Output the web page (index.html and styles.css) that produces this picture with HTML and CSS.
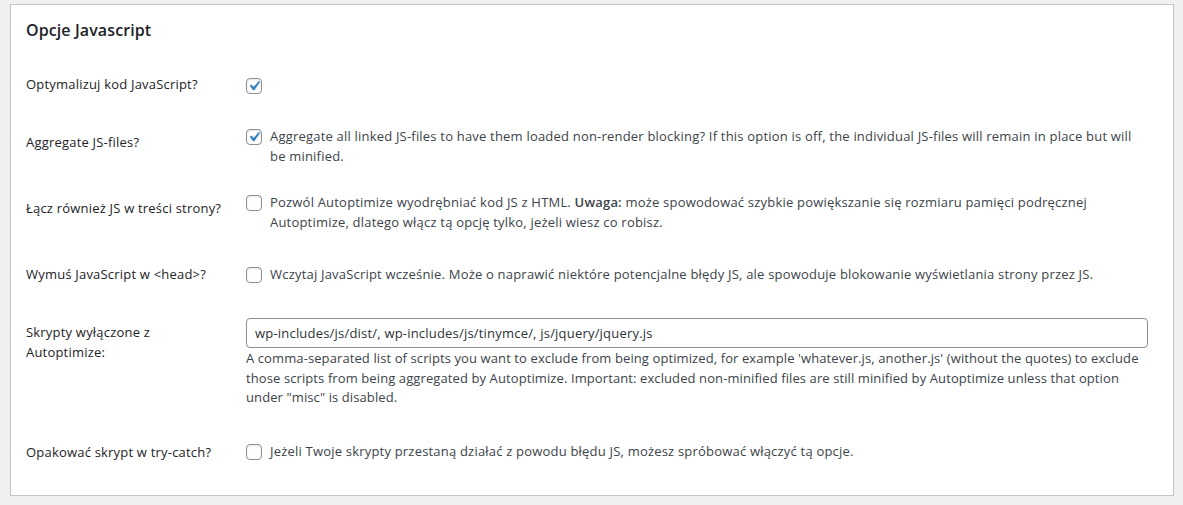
FILE: index.html
```html
<!DOCTYPE html>
<html lang="pl">
<head>
<meta charset="utf-8">
<title>Opcje Javascript</title>
<link rel="stylesheet" href="styles.css">
</head>
<body>
<div class="wrap">
  <section class="panel">
    <h2 class="title">Opcje Javascript</h2>
    <div class="form">
      <div class="row">
        <div class="th">Optymalizuj kod JavaScript?</div>
        <div class="td">
          <label class="check">
            <span class="box checked"><svg viewBox="0 0 20 20" width="20" height="20"><path d="M14.83 4.89l1.34.94-5.81 8.38H9.02L5.78 9.67l1.34-1.25 2.57 2.4z"/></svg></span>
          </label>
        </div>
      </div>
      <div class="row">
        <div class="th">Aggregate JS-files?</div>
        <div class="td">
          <label class="check">
            <span class="box checked"><svg viewBox="0 0 20 20" width="20" height="20"><path d="M14.83 4.89l1.34.94-5.81 8.38H9.02L5.78 9.67l1.34-1.25 2.57 2.4z"/></svg></span>
            <span class="text">Aggregate all linked JS-files to have them loaded non-render blocking? If this option is off, the individual JS-files will remain in place but will be minified.</span>
          </label>
        </div>
      </div>
      <div class="row">
        <div class="th">Łącz również JS w treści strony?</div>
        <div class="td">
          <label class="check">
            <span class="box"></span>
            <span class="text">Pozwól Autoptimize wyodrębniać kod JS z HTML. <strong>Uwaga:</strong> może spowodować szybkie powiększanie się rozmiaru pamięci podręcznej Autoptimize, dlatego włącz tą opcję tylko, jeżeli wiesz co robisz.</span>
          </label>
        </div>
      </div>
      <div class="row">
        <div class="th">Wymuś JavaScript w &lt;head&gt;?</div>
        <div class="td">
          <label class="check">
            <span class="box"></span>
            <span class="text">Wczytaj JavaScript wcześnie. Może o naprawić niektóre potencjalne błędy JS, ale spowoduje blokowanie wyświetlania strony przez JS.</span>
          </label>
        </div>
      </div>
      <div class="row">
        <div class="th">Skrypty wyłączone z Autoptimize:</div>
        <div class="td td-top">
          <div class="input">wp-includes/js/dist/, wp-includes/js/tinymce/, js/jquery/jquery.js</div>
          <p class="desc">A comma-separated list of scripts you want to exclude from being optimized, for example 'whatever.js, another.js' (without the quotes) to exclude those scripts from being aggregated by Autoptimize. Important: excluded non-minified files are still minified by Autoptimize unless that option<br>under "misc" is disabled.</p>
        </div>
      </div>
      <div class="row">
        <div class="th">Opakować skrypt w try-catch?</div>
        <div class="td">
          <label class="check">
            <span class="box"></span>
            <span class="text">Jeżeli Twoje skrypty przestaną działać z powodu błędu JS, możesz spróbować włączyć tą opcje.</span>
          </label>
        </div>
      </div>
    </div>
  </section>
</div>
</body>
</html>
```
FILE: styles.css
```css
html, body {
  margin: 0;
  padding: 0;
  background: #f0f0f1;
}
body {
  font-family: "Open Sans", "Noto Sans", sans-serif;
  font-size: 13px;
  letter-spacing: 0.2px;
  color: #3c434a;
  width: 1183px;
  height: 505px;
  overflow: hidden;
}
.wrap {
  padding: 4px 9px 9px 10px;
}
.panel {
  background: #fff;
  border: 1px solid #c3c4c7;
  padding: 0 15px 14px 15px;
}
.title {
  margin: 0;
  padding-top: 15px;
  height: 50px;
  box-sizing: border-box;
  font-size: 16px;
  line-height: 20px;
  font-weight: 600;
  letter-spacing: 0.1px;
  color: #1d2327;
}
.row {
  display: flex;
}
.th {
  flex: 0 0 200px;
  padding: 19px 10px 19px 0;
  line-height: 20px;
  color: #1d2327;
  min-height: 20px;
}
.td {
  flex: 1;
  align-self: center;
  padding: 14px 10px 13px 10px;
  line-height: 19.5px;
  min-width: 0;
}
.td-top {
  align-self: flex-start;
  padding: 15px 10px 15px 10px;
}
.check {
  display: flex;
  align-items: flex-start;
}
.box {
  flex: 0 0 auto;
  width: 16px;
  height: 16px;
  box-sizing: border-box;
  border: 1px solid #8c8f94;
  border-radius: 4px;
  background: #fff;
  margin-top: 2px;
  margin-right: 8px;
  position: relative;
  box-shadow: inset 0 1px 2px rgba(0, 0, 0, 0.1);
}
.box svg {
  position: absolute;
  left: -3px;
  top: -3px;
  fill: #3582c4;
}
.text strong {
  font-weight: 600;
}
.input {
  height: 30px;
  box-sizing: border-box;
  border: 1px solid #8c8f94;
  border-radius: 4px;
  padding: 0 8px;
  line-height: 28px;
  font-size: 13px;
  color: #2c3338;
  white-space: nowrap;
  overflow: hidden;
}
.desc {
  margin: 1px 0 0 0;
  line-height: 19.5px;
  letter-spacing: 0.1px;
  color: #3c434a;
}
```
